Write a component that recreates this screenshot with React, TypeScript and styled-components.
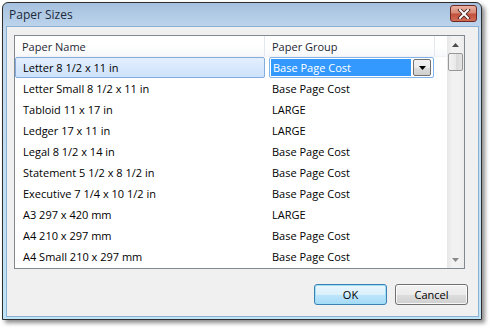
import React from 'react'
import styled, { createGlobalStyle } from 'styled-components'

const GlobalStyle = createGlobalStyle`
  html, body {
    margin: 0;
    padding: 0;
    background: #ffffff;
  }
  body {
    font-family: 'Open Sans', 'Liberation Sans', sans-serif;
    font-size: 11px;
    color: #000;
  }
`

interface PaperRow {
  name: string
  group: string
}

const rows: PaperRow[] = [
  { name: 'Letter 8 1/2 x 11 in', group: 'Base Page Cost' },
  { name: 'Letter Small 8 1/2 x 11 in', group: 'Base Page Cost' },
  { name: 'Tabloid 11 x 17 in', group: 'LARGE' },
  { name: 'Ledger 17 x 11 in', group: 'LARGE' },
  { name: 'Legal 8 1/2 x 14 in', group: 'Base Page Cost' },
  { name: 'Statement 5 1/2 x 8 1/2 in', group: 'Base Page Cost' },
  { name: 'Executive 7 1/4 x 10 1/2 in', group: 'Base Page Cost' },
  { name: 'A3 297 x 420 mm', group: 'LARGE' },
  { name: 'A4 210 x 297 mm', group: 'Base Page Cost' },
  { name: 'A4 Small 210 x 297 mm', group: 'Base Page Cost' },
]

export default function App() {
  return (
    <Stage>
      <GlobalStyle />
      <Window>
        <TitleBar>
          <Title>Paper Sizes</Title>
          <CloseButton>
            <svg width="14" height="10" viewBox="0 0 14 10">
              <path
                d="M3 1 L11 9 M11 1 L3 9"
                stroke="#3d1a18"
                strokeWidth="3.6"
                strokeLinecap="square"
              />
              <path
                d="M3 1 L11 9 M11 1 L3 9"
                stroke="#ffffff"
                strokeWidth="2"
                strokeLinecap="square"
              />
            </svg>
          </CloseButton>
        </TitleBar>
        <Client>
          <ListView>
            <Grid>
              <HeaderRow>
                <HeaderCell $width={250}>Paper Name</HeaderCell>
                <HeaderCell $width={170}>Paper Group</HeaderCell>
                <HeaderFiller />
              </HeaderRow>
              {rows.map((r, i) => (
                <Row key={r.name}>
                  <NameCell $selected={i === 0}>{r.name}</NameCell>
                  {i === 0 ? (
                    <ComboCell>
                      <Combo>
                        <ComboText>{r.group}</ComboText>
                        <ComboButton>
                          <svg width="7" height="4" viewBox="0 0 7 4">
                            <path d="M0 0 H7 L3.5 4 Z" fill="#000" />
                          </svg>
                        </ComboButton>
                      </Combo>
                    </ComboCell>
                  ) : (
                    <GroupCell>{r.group}</GroupCell>
                  )}
                </Row>
              ))}
            </Grid>
            <ScrollBar>
              <ScrollArrow>
                <svg width="7" height="4" viewBox="0 0 7 4">
                  <path d="M0 4 H7 L3.5 0 Z" fill="#4d4d4d" />
                </svg>
              </ScrollArrow>
              <Thumb />
              <Track />
              <ScrollArrow>
                <svg width="7" height="4" viewBox="0 0 7 4">
                  <path d="M0 0 H7 L3.5 4 Z" fill="#8a8a8a" />
                </svg>
              </ScrollArrow>
            </ScrollBar>
          </ListView>
          <ButtonBar>
            <DialogButton $default>OK</DialogButton>
            <DialogButton>Cancel</DialogButton>
          </ButtonBar>
        </Client>
      </Window>
    </Stage>
  )
}

/* Styles */
const Stage = styled.div`
  width: 490px;
  height: 329px;
  padding: 2px 0 0 2px;
  box-sizing: border-box;
  overflow: hidden;
`

const Window = styled.div`
  width: 480px;
  height: 318px;
  box-sizing: border-box;
  border: 1px solid #2e2e2e;
  border-radius: 6px 6px 0 0;
  background: linear-gradient(#a6c1de, #b9d1ea 20px, #c2d8ee 26px, #bfe3f7);
  padding: 0 2px 2px 3px;
  display: flex;
  flex-direction: column;
  box-shadow: 3px 3px 4px rgba(0, 0, 0, 0.45);
`

const TitleBar = styled.div`
  height: 23px;
  display: flex;
  align-items: flex-start;
  justify-content: space-between;
  padding: 0 2px 0 3px;
`

const Title = styled.div`
  font-size: 12px;
  color: #1c2a3c;
  margin-top: 3px;
`

const CloseButton = styled.div`
  margin-top: 2px;
  width: 25px;
  height: 15px;
  border: 1px solid #6b2a24;
  border-radius: 3px;
  background: linear-gradient(#eab2a4, #d88a76 45%, #c2503c 55%, #d36d58);
  display: flex;
  align-items: center;
  justify-content: center;
`

const Client = styled.div`
  flex: 1;
  background: #f0f0f0;
  border: 1px solid #8ab0d4;
  padding: 8px 13px 0 7px;
  display: flex;
  flex-direction: column;
`

const ListView = styled.div`
  height: 234px;
  box-sizing: border-box;
  border: 1px solid #828790;
  background: #fff;
  display: flex;
  overflow: hidden;
`

const Grid = styled.div`
  flex: 1;
  display: flex;
  flex-direction: column;
  overflow: hidden;
`

const HeaderRow = styled.div`
  height: 21px;
  flex-shrink: 0;
  display: flex;
  background: linear-gradient(#ffffff, #ffffff 50%, #f7f8fa);
  border-bottom: 1px solid #f3f3f3;
  box-sizing: border-box;
`

const HeaderCell = styled.div<{ $width: number }>`
  width: ${p => p.$width}px;
  flex-shrink: 0;
  box-sizing: border-box;
  padding-left: 7px;
  border-right: 1px solid #e3e8ef;
  line-height: 21px;
  color: #1e2733;
`

const HeaderFiller = styled.div`
  flex: 1;
`

const Row = styled.div`
  height: 21px;
  flex-shrink: 0;
  display: flex;
  align-items: stretch;
`

const NameCell = styled.div<{ $selected?: boolean }>`
  width: 250px;
  flex-shrink: 0;
  box-sizing: border-box;
  padding-left: 7px;
  line-height: 19px;
  border: 1px solid ${p => (p.$selected ? '#84acdd' : 'transparent')};
  border-radius: 2px;
  background: ${p =>
    p.$selected ? 'linear-gradient(#e3effd, #cde2fc)' : 'transparent'};
`

const GroupCell = styled.div`
  padding-left: 7px;
  line-height: 21px;
`

const ComboCell = styled.div`
  padding-left: 4px;
  display: flex;
`

const Combo = styled.div`
  width: 165px;
  height: 21px;
  box-sizing: border-box;
  border: 1px solid #7eb4ea;
  border-radius: 2px;
  background: #fff;
  display: flex;
  align-items: center;
  padding: 0 1px 0 1px;
  gap: 2px;
`

const ComboText = styled.div`
  width: 140px;
  height: 17px;
  background: #3399ff;
  color: #fff;
  line-height: 17px;
  padding-left: 2px;
  box-sizing: border-box;
`

const ComboButton = styled.div`
  width: 18px;
  height: 17px;
  box-sizing: border-box;
  border: 1px solid #707070;
  border-radius: 2px;
  background: linear-gradient(#f2f2f2, #ebebeb 50%, #dddddd 51%, #cfcfcf);
  display: flex;
  align-items: center;
  justify-content: center;
`

const ScrollBar = styled.div`
  width: 17px;
  flex-shrink: 0;
  display: flex;
  flex-direction: column;
  background: linear-gradient(90deg, #e6e6e6, #f2f2f2 30%, #f2f2f2 70%, #ececec);
`

const ScrollArrow = styled.div`
  height: 17px;
  flex-shrink: 0;
  display: flex;
  align-items: center;
  justify-content: center;
`

const Thumb = styled.div`
  height: 16px;
  margin: 0 1px;
  border: 1px solid #979797;
  border-radius: 2px;
  background: linear-gradient(90deg, #f3f3f3, #e9e9e9 50%, #d9d9d9 51%, #e4e4e4);
`

const Track = styled.div`
  flex: 1;
`

const ButtonBar = styled.div`
  display: flex;
  justify-content: flex-end;
  gap: 8px;
  margin-top: 15px;
  margin-right: -3px;
`

const DialogButton = styled.div<{ $default?: boolean }>`
  width: 73px;
  height: 21px;
  box-sizing: border-box;
  border: 1px solid ${p => (p.$default ? '#3c7fb1' : '#707070')};
  border-radius: 3px;
  box-shadow: inset 0 0 0 1px
    ${p => (p.$default ? '#9fe0f7' : 'rgba(255,255,255,0.8)')};
  background: ${p =>
    p.$default
      ? 'linear-gradient(#eaf6fd, #d9f0fc 50%, #bee6fd 51%, #a7d9f5)'
      : 'linear-gradient(#f2f2f2, #ebebeb 50%, #dddddd 51%, #cfcfcf)'};
  display: flex;
  align-items: center;
  justify-content: center;
  color: #000;
`
